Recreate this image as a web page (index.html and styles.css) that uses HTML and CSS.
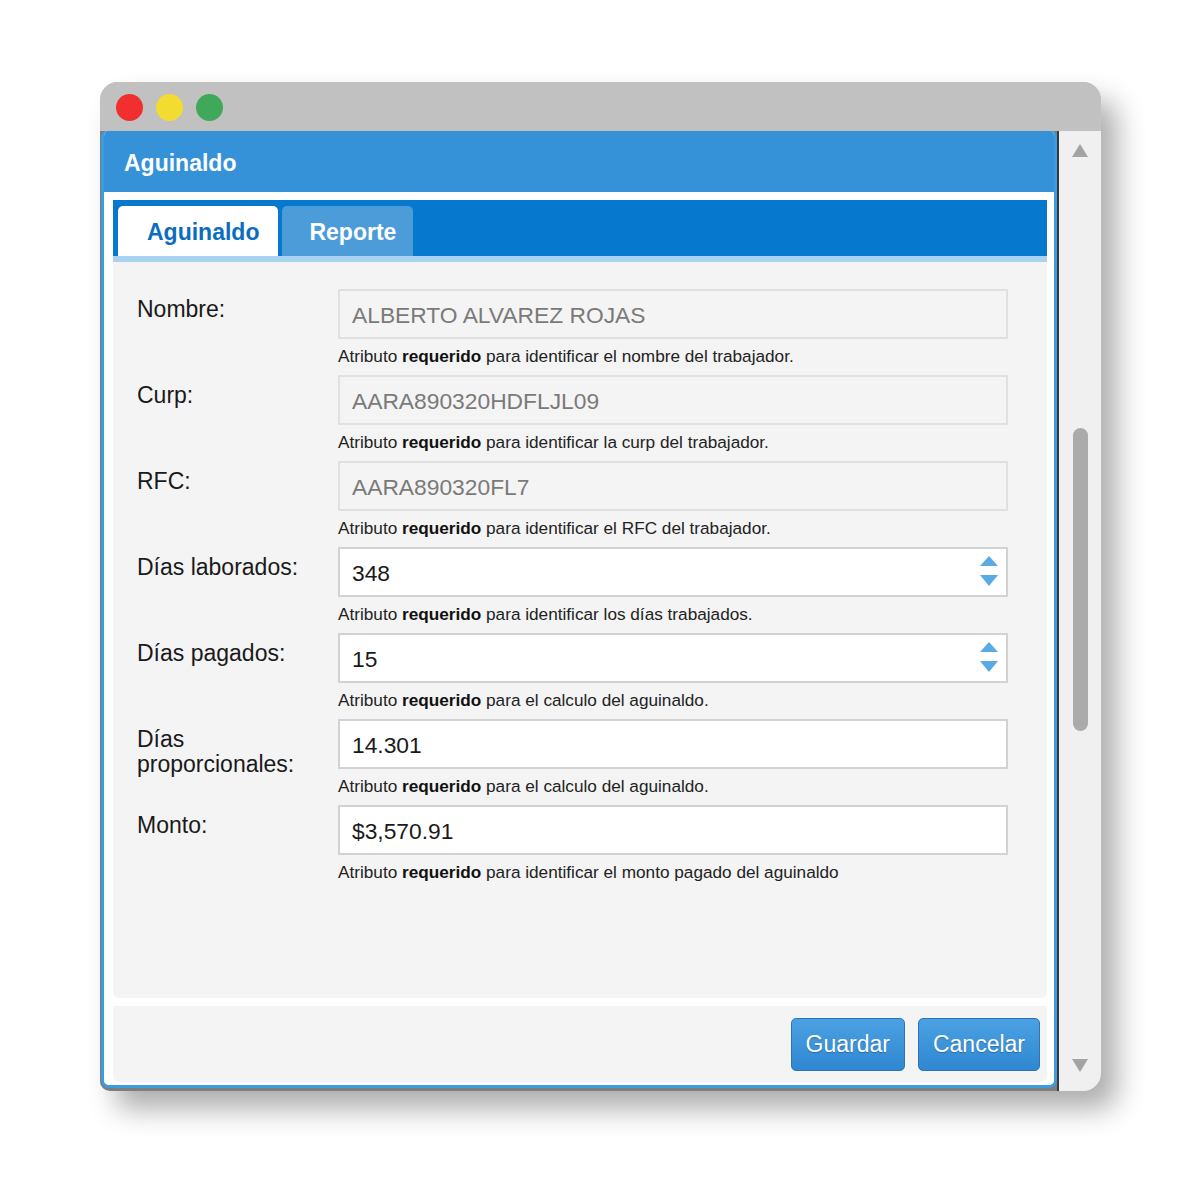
FILE: index.html
```html
<!DOCTYPE html>
<html lang="es">
<head>
<meta charset="utf-8">
<title>Aguinaldo</title>
<link rel="stylesheet" href="styles.css">
</head>
<body>
<div class="stage">
  <div class="window">
    <div class="titlebar">
      <span class="light red"></span>
      <span class="light yellow"></span>
      <span class="light green"></span>
    </div>
    <div class="winbody">
      <div class="viewport">
        <div class="dialog">
          <div class="dlg-header">Aguinaldo</div>
          <div class="dlg-body">
            <div class="tabbar">
              <div class="tab active">Aguinaldo</div>
              <div class="tab">Reporte</div>
            </div>
            <div class="tabstrip"></div>
            <div class="panel">
              <div class="row">
                <div class="label">Nombre:</div>
                <div class="field">
                  <div class="input readonly">ALBERTO ALVAREZ ROJAS</div>
                  <div class="help">Atributo <b>requerido</b> para identificar el nombre del trabajador.</div>
                </div>
              </div>
              <div class="row">
                <div class="label">Curp:</div>
                <div class="field">
                  <div class="input readonly">AARA890320HDFLJL09</div>
                  <div class="help">Atributo <b>requerido</b> para identificar la curp del trabajador.</div>
                </div>
              </div>
              <div class="row">
                <div class="label">RFC:</div>
                <div class="field">
                  <div class="input readonly">AARA890320FL7</div>
                  <div class="help">Atributo <b>requerido</b> para identificar el RFC del trabajador.</div>
                </div>
              </div>
              <div class="row">
                <div class="label">Días laborados:</div>
                <div class="field">
                  <div class="input"><span class="val">348</span>
                    <svg class="spin" width="20" height="32" viewBox="0 0 20 32"><polygon points="1,10 10,0 19,10" fill="#5aaae6"/><polygon points="1,19 19,19 10,30" fill="#5aaae6"/></svg>
                  </div>
                  <div class="help">Atributo <b>requerido</b> para identificar los días trabajados.</div>
                </div>
              </div>
              <div class="row">
                <div class="label">Días pagados:</div>
                <div class="field">
                  <div class="input"><span class="val">15</span>
                    <svg class="spin" width="20" height="32" viewBox="0 0 20 32"><polygon points="1,10 10,0 19,10" fill="#5aaae6"/><polygon points="1,19 19,19 10,30" fill="#5aaae6"/></svg>
                  </div>
                  <div class="help">Atributo <b>requerido</b> para el calculo del aguinaldo.</div>
                </div>
              </div>
              <div class="row">
                <div class="label">Días<br>proporcionales:</div>
                <div class="field">
                  <div class="input">14.301</div>
                  <div class="help">Atributo <b>requerido</b> para el calculo del aguinaldo.</div>
                </div>
              </div>
              <div class="row">
                <div class="label">Monto:</div>
                <div class="field">
                  <div class="input">$3,570.91</div>
                  <div class="help">Atributo <b>requerido</b> para identificar el monto pagado del aguinaldo</div>
                </div>
              </div>
            </div>
            <div class="footer">
              <button class="btn">Guardar</button>
              <button class="btn">Cancelar</button>
            </div>
          </div>
        </div>
      </div>
      <div class="scrollbar">
        <svg class="arrow" width="16" height="13" viewBox="0 0 16 13"><polygon points="0,13 8,0 16,13" fill="#a3a3a3"/></svg>
        <div class="thumb"></div>
        <svg class="arrow down" width="16" height="13" viewBox="0 0 16 13"><polygon points="0,0 16,0 8,13" fill="#a3a3a3"/></svg>
      </div>
    </div>
  </div>
</div>
</body>
</html>
```

FILE: styles.css
```css
* { box-sizing: border-box; }
html, body { margin: 0; padding: 0; background: #ffffff; }
body {
  font-family: "Liberation Sans", Arial, Helvetica, sans-serif;
  color: #1a1a1a;
}
.stage {
  padding: 82px 0 0 100px;
  width: 1194px;
  height: 1181px;
}
.window {
  width: 1001px;
  height: 1009px;
  border-radius: 18px 18px 18px 10px;
  overflow: hidden;
  background: #c1c1c1;
  box-shadow: 16px 18px 28px rgba(0, 0, 0, 0.32);
  display: flex;
  flex-direction: column;
}
.titlebar {
  height: 49px;
  flex: none;
  display: flex;
  align-items: center;
  gap: 13px;
  padding: 2px 0 0 16px;
  background: #c1c1c1;
}
.light {
  width: 27px;
  height: 27px;
  border-radius: 50%;
  display: block;
}
.red { background: #f12f2f; }
.yellow { background: #f1dc2f; }
.green { background: #3fa85a; }

.winbody {
  flex: 1;
  display: flex;
}
.viewport {
  width: 957px;
  flex: none;
  background: #7d7d7d;
  padding: 0 0 3px 1px;
}
.dialog {
  height: 100%;
  display: flex;
  flex-direction: column;
  background: #ffffff;
  border: 3px solid #3d9be0;
  border-top: none;
  border-radius: 6px 6px 8px 8px;
  overflow: hidden;
}
.dlg-header {
  height: 61px;
  flex: none;
  background: #3591d8;
  color: #ffffff;
  font-weight: bold;
  font-size: 23px;
  display: flex;
  align-items: center;
  padding: 4px 0 0 20px;
}
.dlg-body {
  flex: 1;
  display: flex;
  flex-direction: column;
  padding: 8px 7px 2px 9px;
  background: #ffffff;
}
.tabbar {
  height: 56px;
  flex: none;
  background: #0679cf;
  display: flex;
  align-items: flex-end;
  gap: 4px;
  padding-left: 5px;
}
.tab {
  height: 50px;
  display: flex;
  align-items: center;
  padding: 3px 17px 0 27px;
  font-size: 23px;
  font-weight: bold;
  color: #ffffff;
  background: #4b9cd9;
  border-radius: 5px 5px 0 0;
}
.tab.active {
  background: #ffffff;
  color: #0b6dc0;
  padding: 3px 19px 0 29px;
}
.tabstrip {
  height: 6px;
  flex: none;
  background: #a9d2f1;
}
.panel {
  height: 736px;
  flex: none;
  background: #f4f4f4;
  border-radius: 0 0 6px 6px;
  padding: 27px 39px 0 24px;
  display: flex;
  flex-direction: column;
  gap: 10px;
}
.row {
  display: grid;
  grid-template-columns: 201px 1fr;
}
.label {
  font-size: 23px;
  line-height: 25px;
  padding-top: 8px;
  color: #1a1a1a;
}
.field {
  display: flex;
  flex-direction: column;
}
.input {
  height: 50px;
  border: 2px solid #d2d2d2;
  background: #ffffff;
  display: flex;
  align-items: center;
  justify-content: space-between;
  padding: 2px 7px 0 12px;
  font-size: 22.8px;
  color: #1a1a1a;
}
.input.readonly {
  background: #f4f4f4;
  border-color: #e0e0e0;
  color: #7a7a7a;
}
.spin { display: block; margin-top: -2px; }
.help {
  margin-top: 6px;
  height: 20px;
  line-height: 22px;
  font-size: 17.2px;
  color: #222222;
}
.help b { color: #111111; }
.footer {
  margin-top: 8px;
  height: 76px;
  flex: none;
  background: #f4f4f4;
  border-radius: 0 0 6px 6px;
  display: flex;
  justify-content: flex-end;
  align-items: center;
  gap: 13px;
  padding: 0 7px 0 11px;
}
.btn {
  height: 53px;
  padding: 0 14px;
  font-family: "Liberation Sans", Arial, Helvetica, sans-serif;
  font-size: 23px;
  color: #ffffff;
  background: linear-gradient(#4ba1e2, #2f87d1);
  border: 1px solid #2a74b8;
  border-radius: 5px;
  text-shadow: 0 1px 1px rgba(0, 0, 0, 0.25);
}
.scrollbar {
  flex: 1;
  background: #f0f0f0;
  border-left: 2px solid #3a3a3a;
  display: flex;
  flex-direction: column;
  align-items: center;
  padding-top: 13px;
}
.arrow { display: block; flex: none; }
.thumb {
  width: 15px;
  height: 303px;
  margin-top: 271px;
  border-radius: 8px;
  background: #ababab;
}
.arrow.down { margin-top: 328px; }
```
